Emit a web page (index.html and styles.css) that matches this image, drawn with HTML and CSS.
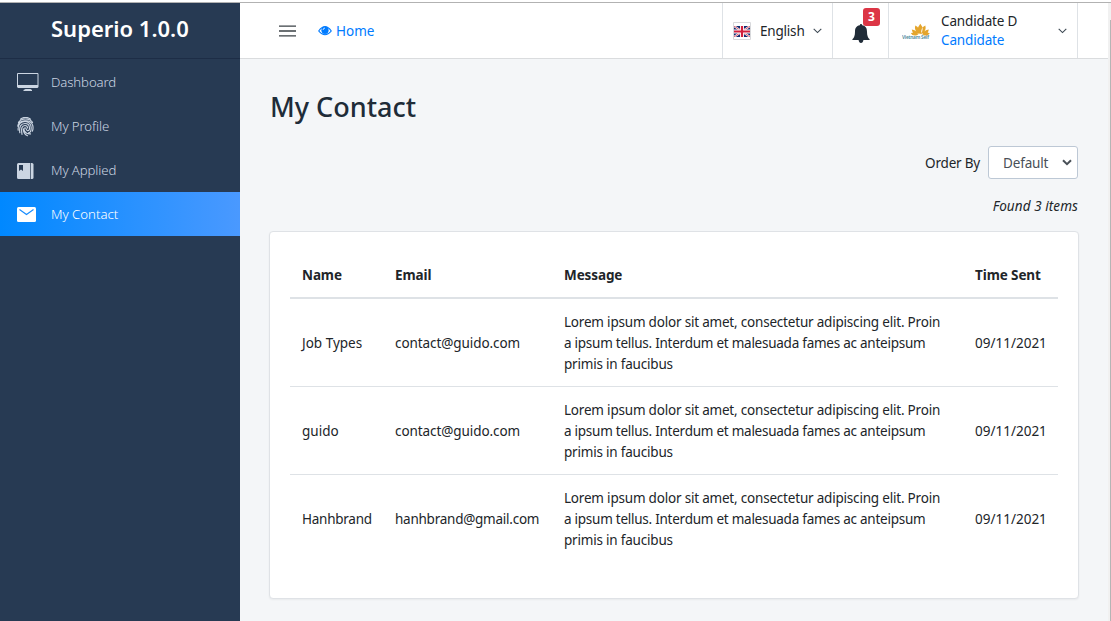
FILE: index.html
```html
<!DOCTYPE html>
<html lang="en">
<head>
<meta charset="utf-8">
<title>My Contact</title>
<link rel="stylesheet" href="styles.css">
</head>
<body>
<div class="app">
  <aside class="sidebar">
    <div class="brand">Superio 1.0.0</div>
    <nav class="menu">
      <a class="menu-item"><span class="menu-icon"><svg width="22" height="20" viewBox="0 0 22 20"><path fill="none" stroke="#cbd5e2" d="M.5 13V1.500h20.500V13"/><path fill="#cbd5e2" d="M0 13h21.500v2l-1 1H1l-1-1zM8.500 17h5l1.500 1v1H6.500v-1z"/></svg></span><span>Dashboard</span></a>
      <a class="menu-item"><span class="menu-icon finger"><svg width="17" height="20" viewBox="0 0 17 20" fill="none" stroke="#cbd5e2" stroke-width="1.150" stroke-linecap="round"><path d="M3.500 2.200C6-.2 11-.2 13.500 2.200M1.500 5.400C4.500.9 12.500.9 15.500 5.400M.7 9.200C1.500 2.400 14 1.700 15.800 8.700c.5 2.600.2 4.300-.5 5.500M1.200 13.200C.5 6.500 4.500 4.500 8 4.500c4 0 6.200 3 6.200 6.200 0 3-1 5-2.700 5M2.800 15.700C2 9.700 3.700 6.500 8 6.500c2.700 0 4.500 2 4.500 4.700 0 1.800-.8 2.600-1.900 2.500-2-.2-1-3-2.500-3-2.600 0-.8 6.600 5.400 6.200M5 17.400C4 11.400 4.800 8.500 8 8.500c1.600 0 2.500 1 2.500 2.500M6.300 12c.2 3.200 1.400 5.600 4.200 6.700"/></svg></span><span>My Profile</span></a>
      <a class="menu-item"><span class="menu-icon book"><svg width="18" height="18" viewBox="0 0 18 18" fill="#cbd5e2"><path fill-rule="evenodd" d="M1.500 1H13.300v16H1.500Q0 17 0 15.500v-13Q0 1 1.500 1zM2 3v6l2-1.500L6 9V3z"/><path d="M14 1h1q1.500 0 1.500 1.500v13Q16.500 17 15 17h-1z"/></svg></span><span>My Applied</span></a>
      <a class="menu-item active"><span class="menu-icon mail"><svg width="20" height="17" viewBox="0 0 20 17"><rect y="1" width="19" height="15" rx="1.500" fill="#fff"/><path fill="none" stroke="#168cff" stroke-width="1.100" d="M2.500 3.500l7 5 7-5"/></svg></span><span>My Contact</span></a>
    </nav>
  </aside>
  <div class="page">
    <header class="topbar">
      <svg class="burger" width="18" height="12" viewBox="0 0 18 12"><path stroke="#3b4146" stroke-width="1.300" d="M0 1.200h17M0 6h17M0 10.800h17"/></svg>
      <a class="home"><svg width="14" height="12" viewBox="0 0 14 12"><path fill="none" stroke="#007bff" stroke-width="1.100" d="M.7 6Q7-2.800 13.300 6 7 13.600.7 6z"/><circle cx="7" cy="5.300" r="3.600" fill="#007bff"/><path d="M5 5q.1-1.800 2-2" fill="none" stroke="#fff" stroke-width=".8"/></svg><span>Home</span></a>
      <div class="language">
        <svg width="18" height="18" viewBox="0 0 18 18"><path fill="#fff" stroke="#d8d9dc" d="M.5.5h17v17H.5z"/><svg x="1" y="4" width="16" height="11" viewBox="0 0 16 11"><path fill="#12296f" d="M0 0h16v11H0z"/><path stroke="#fff" stroke-width="2" d="M0 0l16 11M16 0L0 11"/><path stroke="#d22a43" stroke-width=".8" d="M0 0l16 11M16 0L0 11"/><path stroke="#fff" stroke-width="4" d="M8 0v11M0 5.500h16"/><path stroke="#d21f3c" stroke-width="2.200" d="M8 0v11M0 5.500h16"/></svg></svg>
        <span>English</span>
        <svg class="chev" width="9" height="6" viewBox="0 0 9 6"><path fill="none" stroke="#3d4852" stroke-width="1.100" d="M.7.9l3.800 3.700L8.300.9"/></svg>
      </div>
      <div class="alerts">
        <svg width="18" height="20" viewBox="0 0 18 20" fill="#202c38"><path d="M9 0q1.200 0 1.200 1.300c3.600.8 4.800 3 4.800 6.500 0 4 .8 5.800 2.600 7.400V16H.4v-.8C2.200 13.600 3 11.800 3 7.800c0-3.500 1.200-5.700 4.800-6.500Q7.800 0 9 0zM6.600 16h4.800Q11 19 9 19t-2.400-3z"/></svg>
        <span class="count">3</span>
      </div>
      <div class="user">
        <svg class="avatar" width="28" height="28" viewBox="0 0 28 28"><g fill="#e4a52c"><path d="M14 17q-5-5 0-11 5 6 0 11zM13 17Q7 14 8.700 8q5 2 4.300 9zM15 17q6-3 4.300-9-5 2-4.300 9zM12 17.500Q6 18 5 12q5 .5 7 5.500zM16 17.500q6 .5 7-5.500-5 .5-7 5.500zM11 17.800q-5 2-7-2 4-1 7 2zM17 17.800q5 2 7-2-4-1-7 2z"/></g><text x="0" y="22" textLength="27" class="avatar-text">Vietnam Self</text></svg>
        <div class="who"><span>Candidate D</span><span class="role">Candidate</span></div>
        <svg class="chev" width="9" height="6" viewBox="0 0 9 6"><path fill="none" stroke="#3d4852" stroke-width="1.100" d="M.7.9l3.800 3.700L8.300.9"/></svg>
      </div>
    </header>
    <main class="content">
      <h1>My Contact</h1>
      <div class="order"><span class="order-label">Order By</span><div class="select"><span>Default</span><svg width="10" height="7" viewBox="0 0 10 7"><path fill="none" stroke="#495057" stroke-width="2" d="M1 1.200l4 4 4-4"/></svg></div></div>
      <p class="found">Found 3 items</p>
      <section class="card">
        <table>
          <colgroup><col class="c-name"><col class="c-email"><col class="c-message"><col class="c-time"></colgroup>
          <thead><tr><th>Name</th><th>Email</th><th>Message</th><th>Time Sent</th></tr></thead>
          <tbody>
            <tr><td>Job Types</td><td class="email">contact@guido.com</td><td class="message">Lorem ipsum dolor sit amet, consectetur adipiscing elit. Proin<br><span class="middle">a ipsum tellus. Interdum et malesuada fames ac anteipsum</span><br>primis in faucibus</td><td>09/11/2021</td></tr>
            <tr><td>guido</td><td class="email">contact@guido.com</td><td class="message">Lorem ipsum dolor sit amet, consectetur adipiscing elit. Proin<br><span class="middle">a ipsum tellus. Interdum et malesuada fames ac anteipsum</span><br>primis in faucibus</td><td>09/11/2021</td></tr>
            <tr><td class="long">Hanhbrand</td><td class="email long">hanhbrand@gmail.com</td><td class="message">Lorem ipsum dolor sit amet, consectetur adipiscing elit. Proin<br><span class="middle">a ipsum tellus. Interdum et malesuada fames ac anteipsum</span><br>primis in faucibus</td><td>09/11/2021</td></tr>
          </tbody>
        </table>
      </section>
    </main>
  </div>
  <div class="edge"><div class="edge-thumb"></div></div>
</div>
</body>
</html>
```
FILE: styles.css
```css
* { box-sizing: border-box; }
body { margin: 0; background: #fff; color: #212529; font: 13.5px/21px "Noto Sans", "Open Sans", sans-serif; overflow: hidden; }
svg { display: block; flex: none; }
.app { display: flex; height: 619px; margin-top: 2px; border-top: 1px solid #b2b2b2; }
.sidebar { width: 240px; flex: none; background: #273a53; }
.brand { height: 56px; padding-left: 51px; border-bottom: 1px solid #1d2d46; color: #fff; font-size: 22px; font-weight: 600; line-height: 50px; white-space: nowrap; }
.menu { display: flex; flex-direction: column; padding-top: 1px; }
.menu-item { display: flex; align-items: center; height: 44px; padding-left: 17px; color: #cbd5e2; font-size: 13.2px; font-weight: 300; letter-spacing: -.1px; }
.menu-icon { width: 34px; flex: none; }
.finger { padding-top: 2px; }
.book, .mail { padding-top: 1px; }
.active { color: #fff; background: linear-gradient(90deg, #0088ff, #4a99ff); letter-spacing: 0; }
.page { flex: 1; min-width: 0; background: #f4f6f8; }
.topbar { display: flex; align-items: center; height: 56px; background: #fff; border-bottom: 1px solid #dadcde; }
.burger { margin-left: 39px; margin-top: 1px; }
.home { display: flex; align-items: center; gap: 4px; margin-left: 21px; padding-top: 1px; color: #007bff; }
.language { display: flex; align-items: center; width: 110px; height: 55px; margin-left: auto; padding: 1px 10px 0; border-left: 1px solid #dee2e6; }
.language span { margin-left: 9px; letter-spacing: -.2px; }
.chev { margin-left: auto; }
.alerts { position: relative; display: flex; align-items: center; justify-content: center; width: 56px; height: 55px; padding-top: 6px; border-left: 1px solid #dee2e6; }
.count { position: absolute; left: 30px; top: 5px; width: 17px; height: 18px; border-radius: 3px; background: #dc3545; color: #fff; font-size: 12px; font-weight: 700; line-height: 18px; text-align: center; }
.user { display: flex; align-items: center; width: 190px; height: 55px; margin-right: 30px; padding: 0 10px 0 13px; border: solid #dee2e6; border-width: 0 1px; }
.avatar g { transform: translate(5px, 1px) scale(.95); }
.avatar-text { font-size: 4.8px; font-weight: 600; fill: #4a8798; }
.who { display: flex; flex-direction: column; margin-left: 11px; letter-spacing: -.15px; line-height: 19px; }
.role { color: #007bff; }
.content { padding: 0 29px; }
h1 { margin: 0; padding: 28px 0 0 1px; font-size: 27px; font-weight: 500; line-height: 40px; color: #202c38; }
.order { display: flex; align-items: center; justify-content: flex-end; gap: 8px; height: 33px; margin-top: 19px; padding-right: 1px; }
.order-label { padding-top: 1px; letter-spacing: -.2px; }
.select { display: flex; align-items: center; justify-content: space-between; width: 90px; height: 33px; padding: 0 5px 0 14px; border: 1px solid #bdc8d5; border-radius: 3px; background: #fff; color: #495057; letter-spacing: -.15px; }
.select span { padding-top: 1px; }
.found { margin: 17px 1px 14px; text-align: right; font-style: italic; letter-spacing: .08px; }
.card { height: 368px; padding: 20px; border: 1px solid #dfe2e6; border-radius: 4px; background: #fff; box-shadow: 0 1px 2px rgba(0, 0, 0, .05); }
table { width: 768px; table-layout: fixed; border-collapse: separate; border-spacing: 0; }
.c-name { width: 93px; }
.c-email { width: 169px; }
.c-message { width: 411px; }
.c-time { width: 95px; }
th, td { text-align: left; white-space: nowrap; }
th { padding: 13px 0 11px 12px; border-bottom: 2px solid #dee2e6; letter-spacing: -.1px; }
td { padding: 13px 0 11px 12px; }
tr + tr td { border-top: 1px solid #dee2e6; }
.email { letter-spacing: -.08px; }
.message { letter-spacing: -.2px; }
.middle { letter-spacing: -.25px; }
.long { letter-spacing: -.25px; }
.edge { width: 3px; flex: none; padding-top: 17px; background: #f1f1f1; }
.edge-thumb { width: 1px; height: 100%; margin-left: 2px; background: #b5b5b5; }
```
